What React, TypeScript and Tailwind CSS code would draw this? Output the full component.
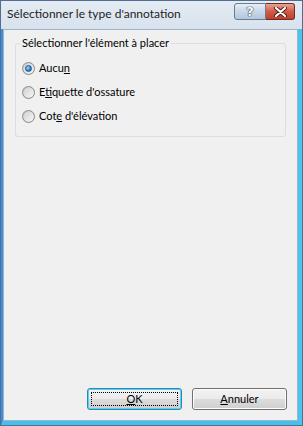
import React from "react";

const font = { fontFamily: 'Lato, "Noto Sans", sans-serif' };

function Radio({ checked }: { checked?: boolean }) {
  return (
    <span className="relative inline-flex h-[13px] w-[13px] shrink-0 items-center justify-center rounded-full border border-[#8a8a8a] bg-gradient-to-br from-[#c8c8c8] to-[#f4f4f4]">
      <span className="h-[9px] w-[9px] rounded-full bg-gradient-to-br from-[#d2d2d2] to-[#f6f6f6]" />
      {checked && (
        <span className="absolute h-[7px] w-[7px] rounded-full border border-[#1b5a93] bg-[radial-gradient(circle_at_35%_35%,#a6d8ff,#2a7fd0_60%,#0f4f9a)]" />
      )}
    </span>
  );
}

export default function App() {
  return (
    <div
      className="w-[303px] h-[426px] overflow-hidden bg-[#d9e3ee] border border-[#4e6f91] flex flex-col text-[#000]"
      style={font}
    >
      {/* title bar */}
      <div className="h-[28px] shrink-0 flex items-start bg-gradient-to-b from-[#e4ebf3] to-[#d8e2ed]">
        <div className="pl-[6px] pt-[4px] text-[12px] leading-[18px] text-[#1e1e1e]">
          Sélectionner le type d'annotation
        </div>
        <div className="ml-auto mr-[7px] mt-[2px] flex">
          <div className="w-[32px] h-[17px] rounded-l-[3px] border border-[#6b7d93] bg-gradient-to-b from-[#e6eef7] via-[#c9d7e7] to-[#b4c7dd] flex items-center justify-center">
            <span
              className="text-[13px] font-bold leading-none text-white"
              style={{ fontFamily: '"DejaVu Sans", sans-serif', textShadow: "0 0 1px #2d3a4a, 0 0 1px #2d3a4a, 0 0 1px #2d3a4a" }}
            >
              ?
            </span>
          </div>
          <div className="w-[29px] h-[17px] rounded-r-[3px] border border-l-0 border-[#6e2a25] bg-gradient-to-b from-[#e8a394] via-[#cf5a48] to-[#c0402e] flex items-center justify-center">
            <svg width="13" height="10" viewBox="0 0 13 10">
              <path d="M2 1 L11 9 M11 1 L2 9" stroke="#4a1a14" strokeWidth="4" strokeLinecap="round" />
              <path d="M2 1 L11 9 M11 1 L2 9" stroke="#ffffff" strokeWidth="2.2" strokeLinecap="round" />
            </svg>
          </div>
        </div>
      </div>

      {/* body with side frames */}
      <div className="flex-1 flex min-h-0 border-l-[2px] border-l-[#3b8fd8] border-r-[4px] border-r-[#4cc3ea] border-b-[4px] border-b-[#45c0ea]">
        <div className="flex-1 flex flex-col bg-[#f0f0f0] border border-[#9fb3c8] text-[11px] leading-[16px]">
          {/* group box */}
          <div className="relative mx-[11px] mt-[13px] h-[94px] rounded-[3px] border border-[#d5dfe5]">
            <div className="absolute -top-[9px] left-[4px] bg-[#f0f0f0] px-[2px] leading-[16px]">
              Sélectionner l'élément à placer
            </div>
            <div className="flex flex-col gap-[8px] pl-[6px] pt-[16px]">
              <div className="flex items-center gap-[4px] h-[16px]">
                <Radio checked />
                <span>
                  Aucu<span className="underline">n</span>
                </span>
              </div>
              <div className="flex items-center gap-[4px] h-[16px]">
                <Radio />
                <span>
                  E<span className="underline">t</span>iquette d'ossature
                </span>
              </div>
              <div className="flex items-center gap-[4px] h-[16px]">
                <Radio />
                <span>
                  Cot<span className="underline">e</span> d'élévation
                </span>
              </div>
            </div>
          </div>

          <div className="flex-1" />

          {/* buttons */}
          <div className="flex justify-end gap-[10px] pr-[10px] pb-[10px]">
            <div className="w-[95px] h-[22px] rounded-[3px] border border-[#3c7fb1] p-[1px] bg-gradient-to-b from-[#eaf6fd] to-[#bee6fd] shadow-[inset_0_0_0_1px_#48d8fb]">
              <div className="h-full w-full rounded-[2px] bg-[linear-gradient(to_bottom,#f2f2f2_0%,#ebebeb_50%,#dddddd_50%,#cfcfcf_100%)] p-[2px]">
                <div className="h-full w-full border border-dotted border-black flex items-center justify-center">
                  <span>
                    <span className="underline">O</span>K
                  </span>
                </div>
              </div>
            </div>
            <div className="w-[95px] h-[22px] rounded-[3px] border border-[#707070] bg-[linear-gradient(to_bottom,#f2f2f2_0%,#ebebeb_50%,#dddddd_50%,#cfcfcf_100%)] shadow-[inset_0_0_0_1px_#fcfcfc] flex items-center justify-center">
              <span>
                <span className="underline">A</span>nnuler
              </span>
            </div>
          </div>
        </div>
      </div>
    </div>
  );
}
